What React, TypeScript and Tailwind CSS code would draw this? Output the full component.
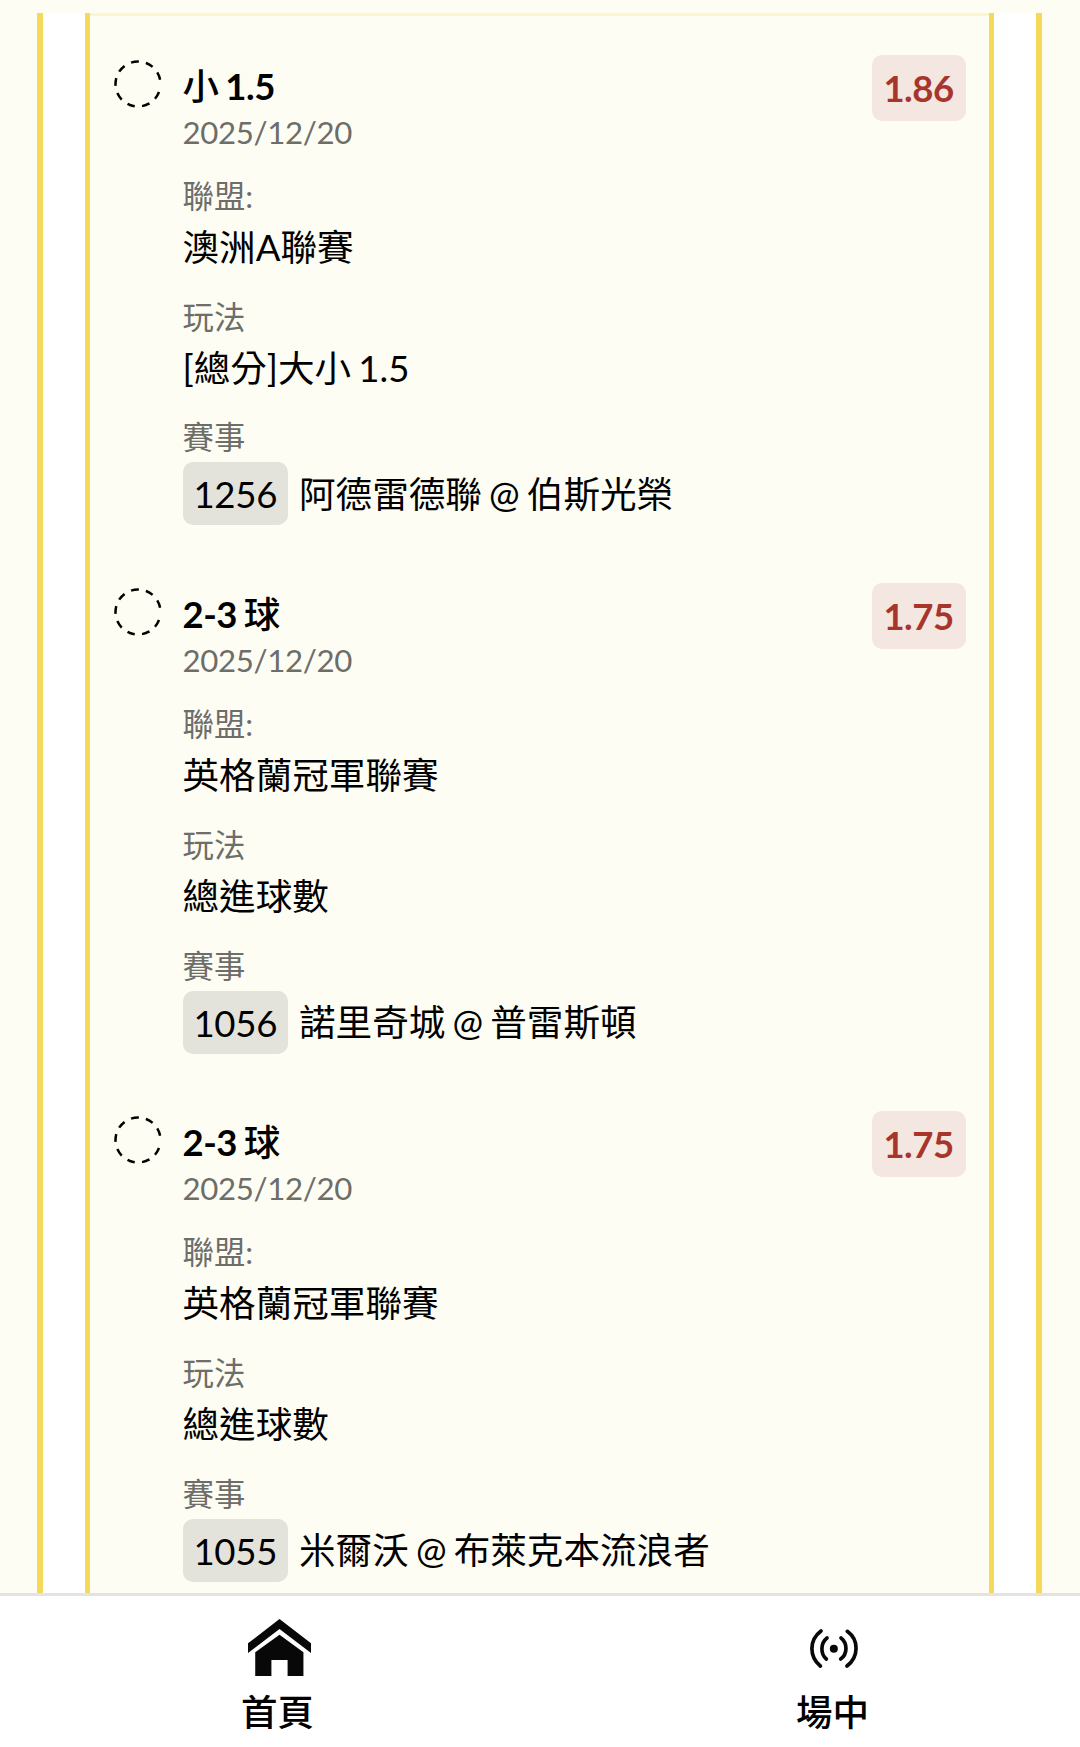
import type { ReactNode } from 'react';

type Bet = {
  pick: string;
  date: string;
  odds: string;
  league: string;
  play: string;
  code: string;
  match: string;
};

const bets: Bet[] = [
  {
    pick: '小 1.5',
    date: '2025/12/20',
    odds: '1.86',
    league: '澳洲A聯賽',
    play: '[總分]大小 1.5',
    code: '1256',
    match: '阿德雷德聯 @ 伯斯光榮',
  },
  {
    pick: '2-3 球',
    date: '2025/12/20',
    odds: '1.75',
    league: '英格蘭冠軍聯賽',
    play: '總進球數',
    code: '1056',
    match: '諾里奇城 @ 普雷斯頓',
  },
  {
    pick: '2-3 球',
    date: '2025/12/20',
    odds: '1.75',
    league: '英格蘭冠軍聯賽',
    play: '總進球數',
    code: '1055',
    match: '米爾沃 @ 布萊克本流浪者',
  },
];

const DashedCircle = () => (
  <svg className="mt-[5px] h-12 w-12 shrink-0" viewBox="0 0 48 48" fill="none">
    <circle
      cx="24"
      cy="24"
      r="22.5"
      pathLength="360"
      stroke="#000"
      strokeWidth="2.5"
      strokeDasharray="20 18.5 20 18.5 20 18.5 20 18.5 20 18.5 20 18.5 20 18.5 20 18.5 20 32"
      transform="rotate(21 24 24)"
    />
  </svg>
);

const HomeIcon = () => (
  <svg
    className="h-[57px] w-[63px]"
    viewBox="0 0 183 171"
    preserveAspectRatio="none"
    fill="#080808"
  >
    <path d="M91.5 0 183 73v29L91.5 30 0 102V73Z" />
    <path d="M91.5 47 161 100v71h-46v-48H68v48H21v-71Z" />
  </svg>
);

const LiveIcon = () => (
  <svg
    className="mt-[2px] h-[39px] w-12"
    viewBox="0 0 144 117"
    fill="none"
    stroke="#080808"
    strokeWidth="11"
    strokeLinecap="round"
  >
    <path d="M33 6C-3 33-3 83 31 111" />
    <path d="M51 27C31 43 31 75 49 90" />
    <path d="M93 27C113 43 113 75 92 90" />
    <path d="M112 7C147 33 147 83 111 111" />
    <circle cx="71.5" cy="59" r="12" fill="#080808" stroke="none" />
  </svg>
);

// 中文用 medium 字重，数字用 bold
const PickTitle = ({ text }: { text: string }) => (
  <h3 className="h-[47px] text-[36.5px] leading-[47px] font-bold tracking-[-0.5px] [word-spacing:-1.5px]">
    {text.split(/([\u4e00-\u9fff]+)/).map((part, i) =>
      i % 2 ? (
        <span key={i} className="font-medium">
          {part}
        </span>
      ) : (
        part
      ),
    )}
  </h3>
);

const Field = ({ label, children }: { label: string; children: ReactNode }) => (
  <div className="mb-[18.7px]">
    <p className="h-[46px] text-[31.4px] leading-[46px] text-[#6d6d69]">
      {label}
    </p>
    <div className="h-14 text-[36.6px] leading-[56px] [word-spacing:-2.2px]">
      {children}
    </div>
  </div>
);

const BetItem = ({ bet }: { bet: Bet }) => (
  <div className="flex h-[528.2px] items-start pr-[23.5px] pl-[24px]">
    <DashedCircle />
    <div className="ml-[20.5px] flex-1 pt-2 whitespace-nowrap">
      <PickTitle text={bet.pick} />
      <p className="mb-[17px] h-[46px] text-[31.2px] leading-[45px] tracking-[-0.35px] text-[#6d6d69]">
        {bet.date}
      </p>
      <Field label="聯盟:">{bet.league}</Field>
      <Field label="玩法">{bet.play}</Field>
      <Field label="賽事">
        <div className="flex items-center pt-[2px]">
          <span className="mr-[11px] h-[63px] w-[105.5px] rounded-[10px] bg-[#e3e3dc] text-center leading-[65px] tracking-[-0.3px]">
            {bet.code}
          </span>
          <span>{bet.match}</span>
        </div>
      </Field>
    </div>
    <span className="h-[66px] w-[94px] rounded-[10px] bg-[#f4e6e0] text-center text-[36.5px] leading-[67px] font-bold tracking-[-0.5px] text-[#a8352b]">
      {bet.odds}
    </span>
  </div>
);

const NavItem = ({ icon, label }: { icon: ReactNode; label: string }) => (
  <div className="flex flex-col items-center">
    <div className="flex h-[57px] items-center">{icon}</div>
    <span className="mt-[10px] mr-[3px] text-[36.5px] leading-[53px] font-medium">
      {label}
    </span>
  </div>
);

const App = () => {
  return (
    <div className="flex h-[1747px] w-[1080px] flex-col overflow-hidden bg-[#fefdf4] font-[Lato,'Noto_Sans_CJK_TC',sans-serif] text-black">
      <main className="mt-[13px] h-[1580px] shrink-0 overflow-hidden pr-[38px] pl-[37px]">
        <div className="h-full border-x-[6px] border-[#f4da58] bg-white px-[42px]">
          <div className="h-full border-x-[5px] border-[#f4da58] bg-[#fefdf4]">
            <div className="h-[42px] border-t-[3px] border-[#fdf4d0]" />
            {bets.map((bet, i) => (
              <BetItem key={i} bet={bet} />
            ))}
          </div>
        </div>
      </main>
      <nav className="flex flex-1 border-t-[3px] border-[#e4e2e2] bg-white pt-[23px]">
        <div className="w-[558px]">
          <NavItem icon={<HomeIcon />} label="首頁" />
        </div>
        <div className="flex-1 pl-[30px]">
          <NavItem icon={<LiveIcon />} label="場中" />
        </div>
      </nav>
    </div>
  );
};

export default App;
